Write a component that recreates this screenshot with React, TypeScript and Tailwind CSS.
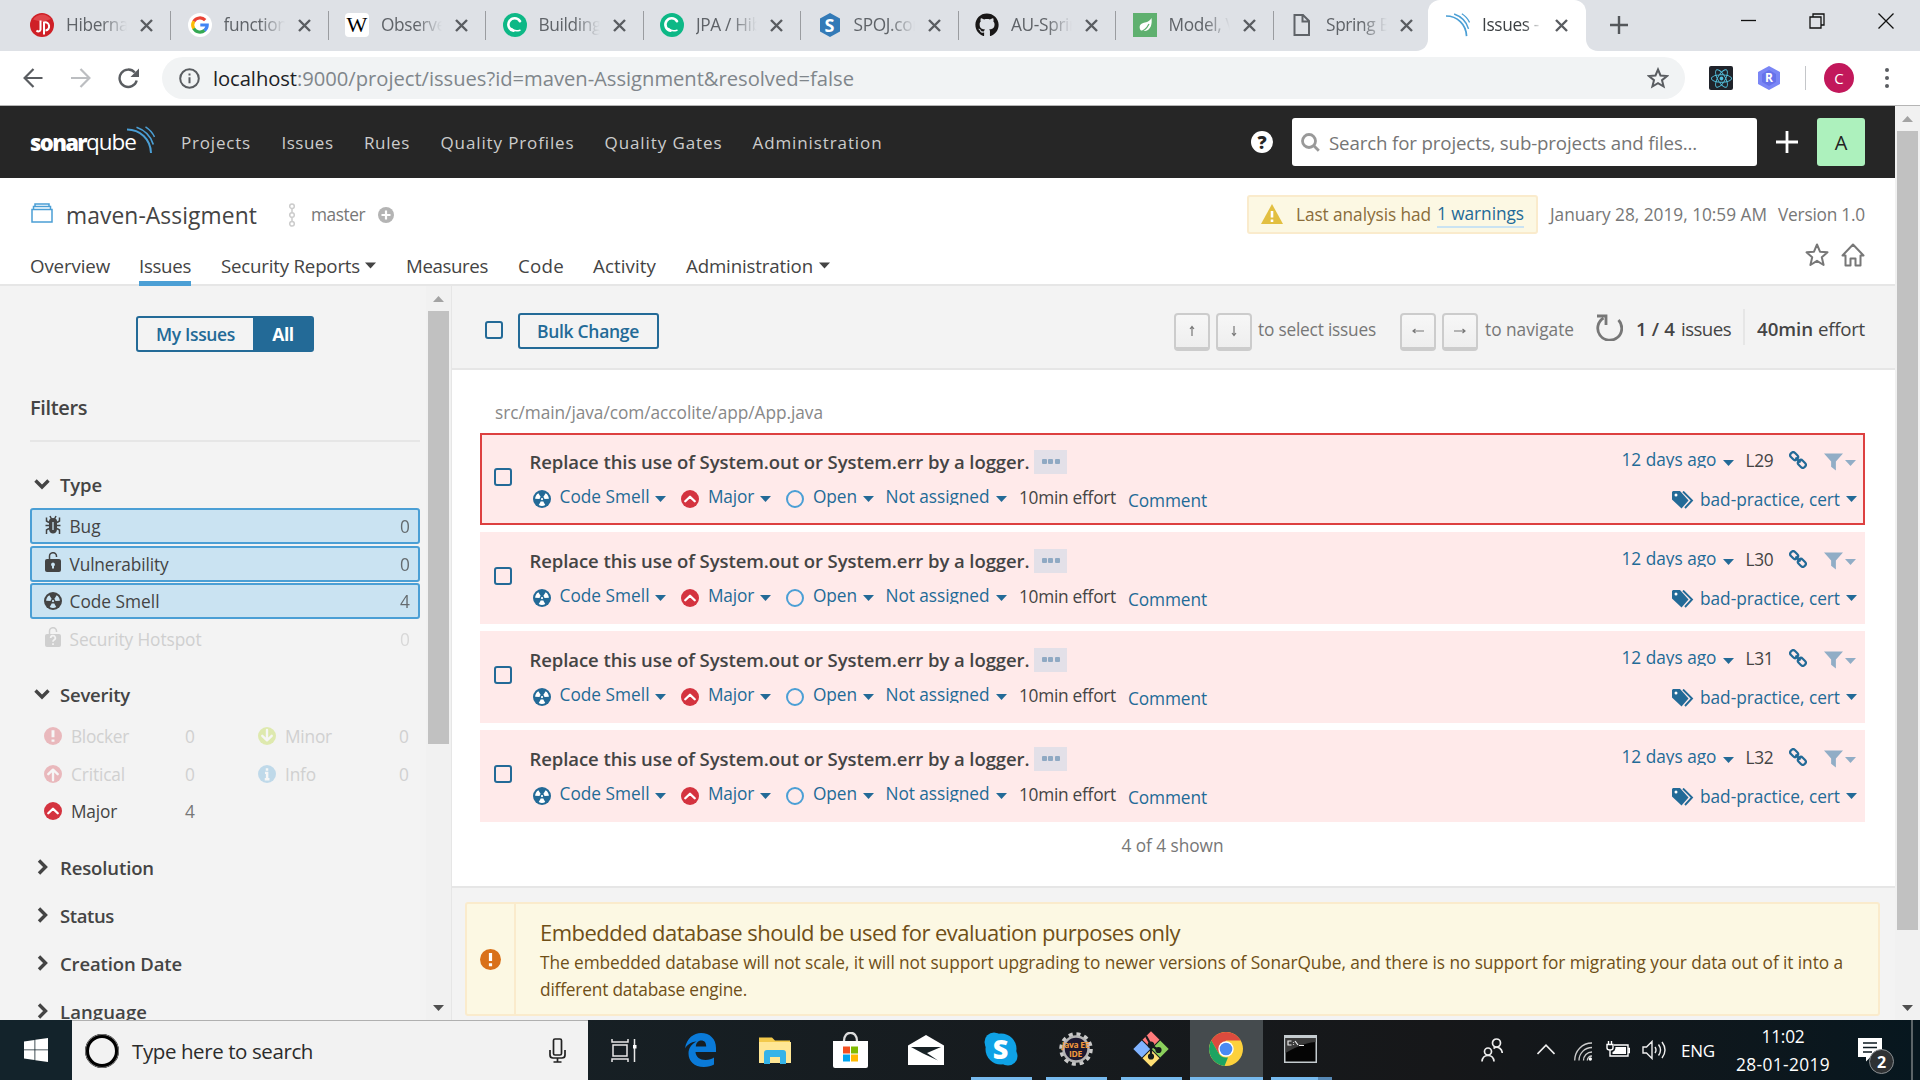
import { useLayoutEffect, useRef, type ReactNode } from "react";
import { FaGithub, FaReact } from "react-icons/fa";

/* A single line of text spread evenly over a given width. */
function T({ w, flat = false, className = "", children }: { w: number; flat?: boolean; className?: string; children: ReactNode }) {
  const ref = useRef<HTMLSpanElement>(null);
  useLayoutEffect(() => {
    const el = ref.current;
    if (!el) return;
    el.style.letterSpacing = "0px";
    const natural = el.getBoundingClientRect().width;
    const count = (el.textContent || "").length;
    if (count > 0) el.style.letterSpacing = `${(w - natural) / count}px`;
  }, [w]);
  return (
    <span className={`block shrink-0 whitespace-nowrap ${flat ? "" : "pt-[2px]"} ${className}`} style={{ width: w }}>
      <span ref={ref} className="inline-block">
        {children}
      </span>
    </span>
  );
}

/* ---------- shared icons ---------- */

function Caret({ className = "" }: { className?: string }) {
  return (
    <svg viewBox="0 0 11 6" className={`h-[6px] w-[11px] shrink-0 ${className}`} fill="currentColor">
      <path d="M0 0h11L5.5 6z" />
    </svg>
  );
}

function SonarWaves({ className = "" }: { className?: string }) {
  return (
    <svg viewBox="0 0 28 28" className={`shrink-0 ${className}`} fill="none" stroke="#4b9fd5">
      <path d="M0 3.5C13 3.5 23.5 13 24 27" strokeWidth="2" />
      <path d="M9.5 1.2C17.5 4 24 10.5 26.3 18.5" strokeWidth="1.7" />
      <path d="M18.5.8C22.5 3.4 25.8 7 27.5 11" strokeWidth="1.5" />
    </svg>
  );
}

function SmellIcon({ className = "", hole = "#fff" }: { className?: string; hole?: string }) {
  const wedge = "M7 9.9 5.1 13.4a6.2 6.2 0 0 0 5.8 0L9 9.9a2.2 2.2 0 0 1-2 0z";
  return (
    <svg viewBox="0 0 16 16" className={`h-[18px] w-[18px] shrink-0 ${className}`}>
      <circle cx="8" cy="8" r="8" fill="currentColor" />
      <g fill={hole}>
        <path d={wedge} />
        <path d={wedge} transform="rotate(120 8 8)" />
        <path d={wedge} transform="rotate(240 8 8)" />
        <circle cx="8" cy="8" r="1" />
      </g>
    </svg>
  );
}

function SeverityIcon({ kind, className = "" }: { kind: string; className?: string }) {
  const color = kind === "minor" ? "#b0d513" : kind === "info" ? "#4b9fd5" : "#d4333f";
  return (
    <svg viewBox="0 0 16 16" className={`h-[18px] w-[18px] shrink-0 ${className}`}>
      <circle cx="8" cy="8" r="8" fill={color} />
      <g fill="none" stroke="#fff" strokeWidth="2.1">
        {kind === "major" && <path d="M3.8 10 8 6l4.2 4" strokeLinecap="round" strokeLinejoin="round" />}
        {kind === "critical" && <path d="M3.8 8.2 8 4.2l4.2 4M8 4.5v9" strokeLinecap="round" strokeLinejoin="round" />}
        {kind === "minor" && <path d="M3.8 7.8 8 11.8l4.2-4M8 11.5v-9" strokeLinecap="round" strokeLinejoin="round" />}
        {kind === "blocker" && <path d="M8 2.8v6.4M8 11v2.2" strokeWidth="2.6" />}
        {kind === "info" && <path d="M8 2.8V5M6.2 7h1.9v5.6M6 12.6h4.2" strokeWidth="2.2" />}
      </g>
    </svg>
  );
}

function Checkbox({ className = "" }: { className?: string }) {
  return <span className={`block h-[18px] w-[18px] shrink-0 rounded-[3px] border-2 border-[#236a97] ${className}`} />;
}

/* ---------- browser chrome ---------- */

function EducativeIcon() {
  return (
    <svg viewBox="0 0 24 24" className="h-6 w-6">
      <circle cx="12" cy="12" r="12" fill="#0db886" />
      <path d="M17 8.200A6.300 6.300 0 1 0 10.500 17.800" fill="none" stroke="#fff" strokeWidth="2.600" strokeLinecap="round" />
      <path d="M8.500 15.500q3 3.500 8.500 1.700" fill="none" stroke="#fff" strokeWidth="1.500" strokeLinecap="round" />
    </svg>
  );
}

const tabs: { label: string; icon: ReactNode }[] = [
  {
    label: "Hibernate",
    icon: (
      <svg viewBox="0 0 24 24" className="h-6 w-6">
        <circle cx="12" cy="12" r="12" fill="#cf2027" />
        <path d="M3 6.500A11 11 0 0 1 21 6L12 9z" fill="#e0454a" />
        <path d="M10.500 7.500v9c0 2-2.500 2.500-4 1M14 21.500V9.500c6-1.500 7 7.500 1.500 8" fill="none" stroke="#fff" strokeWidth="2" />
      </svg>
    ),
  },
  {
    label: "functional",
    icon: (
      <svg viewBox="0 0 24 24" className="h-6 w-6">
        <circle cx="12" cy="12" r="12" fill="#fff" />
        <g fill="none" strokeWidth="3.2">
          <path d="M17.2 7.2A7.2 7.2 0 0 0 5.8 8.5" stroke="#ea4335" />
          <path d="M5.8 8.3a7.2 7.2 0 0 0 0 7.4" stroke="#fbbc05" />
          <path d="M5.7 15.5a7.2 7.2 0 0 0 11 1.8" stroke="#34a853" />
          <path d="M16.5 17.5A7.2 7.2 0 0 0 19.2 12H12.3" stroke="#4285f4" />
        </g>
      </svg>
    ),
  },
  {
    label: "Observer",
    icon: (
      <span className="flex h-6 w-6 items-center justify-center rounded-[4px] bg-white font-['Liberation_Serif',serif] text-[22px] leading-none text-black">
        W
      </span>
    ),
  },
  { label: "Building", icon: <EducativeIcon /> },
  { label: "JPA / Hibernate", icon: <EducativeIcon /> },
  {
    label: "SPOJ.com",
    icon: (
      <span className="relative flex h-6 w-6 items-center justify-center text-[18px] leading-none font-bold text-white">
        <svg viewBox="0 0 24 24" className="absolute inset-0 h-6 w-6">
          <path d="M12 0 22 5.5v13L12 24 2 18.500V5.500z" fill="#337ab7" />
        </svg>
        <span className="relative">S</span>
      </span>
    ),
  },
  { label: "AU-Spring", icon: <FaGithub className="h-6 w-6 text-[#191717]" /> },
  {
    label: "Model, Vi",
    icon: (
      <svg viewBox="0 0 24 24" className="h-6 w-6">
        <path d="M0 0h24v24H0z" fill="#5fb06f" />
        <path d="M18.500 5c.8 6-.6 12-6.500 13-2 .3-3.700-.2-4.600-1C5 12 9 10 12 9.500c3-.5 5-2 6.500-4.500z" fill="#fff" />
        <path d="M6 19c4-.5 8-4 10-8" stroke="#5fb06f" strokeWidth="1.200" fill="none" />
      </svg>
    ),
  },
  {
    label: "Spring Boot",
    icon: (
      <svg viewBox="0 0 24 24" className="h-6 w-6" fill="none" stroke="#5f6368" strokeWidth="2">
        <path d="M4.500 2h8.500l6 6v14H4.500zM12.500 2v6.500h6.500" />
      </svg>
    ),
  },
];

function CloseX({ className = "" }: { className?: string }) {
  return (
    <svg viewBox="0 0 13 13" className={`h-[13px] w-[13px] shrink-0 ${className}`} stroke="#5a5d61" strokeWidth="2.400">
      <path d="M1 1l11 11M12 1 1 12" />
    </svg>
  );
}

function TabStrip() {
  return (
    <div className="flex h-[51px] shrink-0 items-start bg-[#dee1e6] pl-[13.5px]">
      {tabs.map((t, i) => (
        <div key={t.label} className="flex h-[50px] w-[157.5px] shrink-0 items-center">
          <span className="ml-[16.5px] shrink-0">{t.icon}</span>
          <span className="ml-[12px] w-[61px] shrink-0 overflow-hidden [mask-image:linear-gradient(to_right,black_58%,transparent)] text-[17.3px] tracking-[-0.35px] whitespace-nowrap text-[#5f6368]">
            {t.label}
          </span>
          <CloseX className="ml-[13px]" />
          <span className={`ml-[17px] h-[29px] w-[1.5px] ${i === 8 ? "bg-transparent" : "bg-[#9a9ca0]"}`} />
        </div>
      ))}
      <div className="relative -ml-[3px] flex h-[51px] w-[157.5px] shrink-0 items-center rounded-t-[12px] bg-white pb-px">
        <svg viewBox="0 0 12 12" className="absolute bottom-0 -left-3 h-3 w-3">
          <path d="M12 0v12H0C7 12 12 7 12 0z" fill="#fff" />
        </svg>
        <svg viewBox="0 0 12 12" className="absolute -right-3 bottom-0 h-3 w-3">
          <path d="M0 0v12h12C5 12 0 7 0 0z" fill="#fff" />
        </svg>
        <SonarWaves className="ml-[18px] h-7 w-[24px]" />
        <span className="ml-[12px] w-[60px] shrink-0 overflow-hidden [mask-image:linear-gradient(to_right,black_70%,transparent)] text-[17.3px] tracking-[-0.35px] whitespace-nowrap text-[#3c4043]">
          Issues - ma
        </span>
        <CloseX className="ml-[13px]" />
      </div>
      <svg viewBox="0 0 18 18" className="mt-[16px] ml-[24px] h-[18px] w-[18px] shrink-0" stroke="#54575b" strokeWidth="2.400">
        <path d="M9 0v18M0 9h18" />
      </svg>
      <svg viewBox="0 0 16 16" className="mt-[13px] ml-[113px] h-4 w-4 shrink-0" stroke="#111" strokeWidth="1.300">
        <path d="M0 7.500h15" />
      </svg>
      <svg viewBox="0 0 16 16" className="mt-[13px] ml-[52px] h-4 w-4 shrink-0" fill="none" stroke="#111" strokeWidth="1.300">
        <path d="M1 4h11v11H1zM4 4V1h11v11h-3" />
      </svg>
      <svg viewBox="0 0 16 16" className="mt-[13px] ml-[53px] h-4 w-4 shrink-0" stroke="#111" strokeWidth="1.300">
        <path d="M.5.500l15 15M15.500.5l-15 15" />
      </svg>
    </div>
  );
}

function AddressBar() {
  return (
    <div className="flex h-[55px] shrink-0 items-center border-b border-[#b5b5b5] bg-white pl-[23px]">
      <svg viewBox="0 0 20 20" className="h-5 w-5 shrink-0" fill="none" stroke="#5a5d61" strokeWidth="2.200">
        <path d="M19.500 10H1.500M10.500 1 1.600 10l8.900 9" />
      </svg>
      <svg viewBox="0 0 20 20" className="ml-[28px] h-5 w-5 shrink-0" fill="none" stroke="#bcbec1" strokeWidth="2.200">
        <path d="M0 10h18M9.500 1l8.900 9-8.900 9" />
      </svg>
      <svg viewBox="0 0 21 21" className="ml-[27px] h-[21px] w-[21px] shrink-0" fill="none" stroke="#5a5d61" strokeWidth="2.400">
        <path d="M18.700 12.500A8.700 8.700 0 1 1 16.800 4.500" />
        <path d="M21 .5v8.500h-8.500z" fill="#5a5d61" stroke="none" />
      </svg>
      <div className="ml-[23px] flex h-[42px] w-[1523px] shrink-0 items-center rounded-full bg-[#f1f3f4] pl-[17px]">
        <svg viewBox="0 0 21 21" className="h-[21px] w-[21px] shrink-0" fill="none" stroke="#5a5d61" strokeWidth="2">
          <circle cx="10.500" cy="10.500" r="9.300" />
          <path d="M10.500 9.200v6M10.500 5.400v2.200" />
        </svg>
        <T flat w={84} className="ml-[13px] text-[20.200px] text-[#202124]">localhost</T>
        <T flat w={557} className="text-[20.200px] text-[#80868b]">:9000/project/issues?id=maven-Assignment&amp;resolved=false</T>
        <svg viewBox="0 0 22 22" className="ml-[793px] h-[22px] w-[22px] shrink-0" fill="none" stroke="#5a5d61" strokeWidth="2">
          <path d="M11 2.500l2.500 6 6.500.5-5 4.200 1.600 6.300-5.600-3.400-5.600 3.400L7 13.200 2 9l6.500-.5z" />
        </svg>
      </div>
      <span className="ml-[24px] flex h-6 w-6 shrink-0 items-center justify-center rounded-[2px] bg-[#20232a]">
        <FaReact className="h-[21px] w-[21px] text-[#53c1de]" />
      </span>
      <span className="relative ml-[25px] flex h-6 w-[22px] shrink-0 items-center justify-center text-[12px] leading-none font-bold text-white">
        <svg viewBox="0 0 22 24" className="absolute inset-0 h-6 w-[22px]">
          <path d="M11 0l11 6v12l-11 6L0 18V6z" fill="#7a86f5" />
          <path d="M11 4l7 4v8l-7 4-7-4V8z" fill="#6672ea" />
        </svg>
        <span className="relative">R</span>
      </span>
      <span className="ml-[25px] h-[24px] w-px shrink-0 bg-[#c4c6c9]" />
      <span className="ml-[18px] flex h-[30px] w-[30px] shrink-0 items-center justify-center rounded-full bg-[#c2185b] text-[15px] text-white">
        C
      </span>
      <span className="ml-[31px] flex shrink-0 flex-col gap-[4px]">
        <span className="h-1 w-1 rounded-full bg-[#5a5d61]" />
        <span className="h-1 w-1 rounded-full bg-[#5a5d61]" />
        <span className="h-1 w-1 rounded-full bg-[#5a5d61]" />
      </span>
    </div>
  );
}

/* ---------- SonarQube ---------- */

function GlobalNav() {
  const items = [
    ["Projects", 70, "ml-[26px]"],
    ["Issues", 52, "ml-[30.500px]"],
    ["Rules", 46, "ml-[30.500px]"],
    ["Quality Profiles", 134, "ml-[30.500px]"],
    ["Quality Gates", 118, "ml-[30px]"],
    ["Administration", 130, "ml-[30px]"],
  ] as const;
  return (
    <div className="flex h-[72px] shrink-0 items-center bg-[#262626] pl-[30px] text-[#ccc]">
      <div className="flex h-[32px] w-[125px] shrink-0 items-start">
        <T flat w={56} className="mt-[2px] text-[22px] leading-[28px] font-extrabold text-white">sonar</T>
        <T flat w={50} className="mt-[2px] text-[22.500px] leading-[28px] text-white">qube</T>
        <SonarWaves className="-ml-[9px] h-[28px] w-[28px]" />
      </div>
      {items.map(([label, w, ml]) => (
        <T key={label} w={w} className={`${ml} text-[17px]`}>{label}</T>
      ))}
      <span className="ml-[368.500px] flex h-[22px] w-[22px] shrink-0 items-center justify-center rounded-full bg-white text-[18px] leading-none font-extrabold text-[#262626]">
        ?
      </span>
      <div className="ml-[19px] flex h-12 w-[465px] shrink-0 items-center rounded-[3px] bg-white pl-[9px]">
        <svg viewBox="0 0 19 19" className="h-[19px] w-[19px] shrink-0" fill="none" stroke="#999" strokeWidth="2.800">
          <circle cx="8" cy="8" r="6.500" />
          <path d="M12.800 12.800l5 5" />
        </svg>
        <T w={368} className="ml-[9px] text-[18.700px] text-[#757575]">Search for projects, sub-projects and files...</T>
      </div>
      <svg viewBox="0 0 22 22" className="ml-[19px] h-[22px] w-[22px] shrink-0" stroke="#fff" strokeWidth="2.800">
        <path d="M11 0v22M0 11h22" />
      </svg>
      <span className="ml-[19px] flex h-12 w-12 shrink-0 items-center justify-center rounded-[3px] bg-[#adf1bd] pt-[2px] text-[20px] text-[#222]">A</span>
    </div>
  );
}

function ProjectHeader() {
  return (
    <div className="flex h-[108px] shrink-0 flex-col border-b-2 border-[#e6e6e6] bg-white">
      <div className="mt-[17px] flex h-[40px] shrink-0 items-center pl-[31px]">
        <svg viewBox="0 0 22 20" className="-mt-[5px] h-[20px] w-[22px] shrink-0" fill="none" stroke="#4b9fd5" strokeWidth="1.500">
          <path d="M1 6.500h20V19H1zM2.500 6.500V3.600h17v2.900M4 3.600V1h14v2.600" />
        </svg>
        <T w={191} className="ml-[13px] text-[22.800px] text-[#444]">maven-Assigment</T>
        <svg viewBox="0 0 8 24" className="ml-[31px] h-6 w-2 shrink-0" fill="none" stroke="#ccc" strokeWidth="1.500">
          <circle cx="4" cy="3.200" r="2.300" />
          <circle cx="4" cy="12" r="2.300" />
          <circle cx="4" cy="20.800" r="2.300" />
          <path d="M4 5.500v4.200M4 14.300v4.200" />
        </svg>
        <T flat w={54} className="ml-[15px] text-[17.300px] text-[#777]">master</T>
        <svg viewBox="0 0 16 16" className="-mt-px ml-[13px] h-4 w-4 shrink-0">
          <circle cx="8" cy="8" r="8" fill="#b4b4b4" />
          <path d="M8 3.500v9M3.500 8h9" stroke="#fff" strokeWidth="2.200" />
        </svg>
        <div className="-mt-[2px] ml-[853px] flex h-[39px] w-[291px] shrink-0 items-center rounded-[3px] border-2 border-[#faebcc] bg-[#fcf8e3] pl-[12px]">
          <svg viewBox="0 0 22 20" className="h-5 w-[22px] shrink-0">
            <path d="M11 0 22 20H0z" fill="#e2bf41" />
            <path d="M11 7v6.500M11 15.500v2.500" stroke="#fff" strokeWidth="2.600" />
          </svg>
          <T w={135} className="ml-[13px] text-[17.300px] text-[#8a6d3b]">Last analysis had</T>
          <T flat w={87} className="ml-[6px] h-[28px] border-b-2 border-[#cae3f2] text-[17.300px] leading-[27px] text-[#236a97]">1 warnings</T>
        </div>
        <T flat w={217} className="ml-[12px] text-[17.300px] text-[#777]">January 28, 2019, 10:59 AM</T>
        <T flat w={87} className="ml-[11px] text-[17.300px] text-[#777]">Version 1.0</T>
      </div>
      <div className="flex h-[46px] shrink-0 items-end pl-[30px] text-[18.700px] leading-[39px] text-[#444]">
        <T flat w={80} className="h-[35px]">Overview</T>
        <T flat w={52} className="ml-[29px] h-[35px]">Issues</T>
        <T flat w={139} className="ml-[30px] h-[35px]">Security Reports</T>
        <Caret className="mb-[12px] ml-[5px] h-[7px]" />
        <T flat w={82} className="ml-[30px] h-[35px]">Measures</T>
        <T flat w={46} className="ml-[30px] h-[35px]">Code</T>
        <T flat w={63} className="ml-[29px] h-[35px]">Activity</T>
        <T flat w={127} className="ml-[30px] h-[35px]">Administration</T>
        <Caret className="mb-[12px] ml-[6px] h-[7px]" />
        <svg viewBox="0 0 24 24" className="mb-[14px] ml-[975px] h-6 w-6 shrink-0" fill="none" stroke="#777" strokeWidth="2" strokeLinejoin="round">
          <path d="M12 1.500l3 7.200 7.500.6-5.700 5 1.800 7.700-6.600-4.200L5.400 22l1.800-7.700-5.700-5L9 8.700z" />
        </svg>
        <svg viewBox="0 0 24 24" className="mb-[14px] ml-3 h-6 w-6 shrink-0" fill="none" stroke="#777" strokeWidth="2" strokeLinejoin="round">
          <path d="M1.500 12.500 12 1.500l10.500 11h-3v10h-5v-7h-5v7h-5v-10z" />
        </svg>
      </div>
      <div className="ml-[139px] h-[5px] w-[52px] shrink-0 bg-[#4b9fd5]" />
    </div>
  );
}

function FacetTitle({ label, w, open = false, className = "" }: { label: string; w: number; open?: boolean; className?: string }) {
  return (
    <div className={`flex h-[30px] shrink-0 items-center pl-[4px] ${className}`}>
      <svg viewBox="0 0 16 16" className="h-4 w-4 shrink-0" fill="none" stroke="#444" strokeWidth="3.400">
        {open ? <path d="M1.500 4.500 8 11l6.500-6.500" /> : <path d="M5 1.500 11.500 8 5 14.500" />}
      </svg>
      <T w={w} className="ml-[10px] text-[18.500px] font-semibold text-[#444]">{label}</T>
    </div>
  );
}

function LockIcon({ question = false }: { question?: boolean }) {
  return (
    <svg viewBox="0 0 18 20" className="-mt-[3px] h-5 w-[18px] shrink-0">
      <path d="M5.500 8.500V4.400a3.500 3.500 0 0 1 7-.4v1" fill="none" stroke="currentColor" strokeWidth="1.500" />
      <rect x="1" y="7" width="16" height="13" rx="2" fill="currentColor" />
      {question ? (
        <path d="M6.700 11a2.300 2.300 0 1 1 3.300 2c-.7.400-1 .7-1 1.700M9 16.300v1.700" fill="none" stroke="#f3f3f3" strokeWidth="1.700" />
      ) : (
        <path d="M9 10.500a2 2 0 0 1 1 3.700V16.500H8v-2.300a2 2 0 0 1 1-3.700z" fill="#cae3f2" />
      )}
    </svg>
  );
}

function BugIcon() {
  return (
    <svg viewBox="0 0 18 20" className="-mt-[2px] h-5 w-[18px] shrink-0">
      <path d="M5 6C5 2 13 2 13 6v8c0 6-8 6-8 0z" fill="currentColor" />
      <path d="M6 1 7.500 4M12 1 10.500 4M5 7.500 2.500 6V2.500M13 7.500 15.500 6V2.500M5 10.500H1.500M13 10.500h3.500M5 13.500 2.500 15v4M13 13.500l2.500 1.500v4" fill="none" stroke="currentColor" strokeWidth="1.500" />
      <path d="M9 7v8" stroke="#cae3f2" strokeWidth="1.300" />
    </svg>
  );
}

function TypeRow({ icon, label, w, count, className }: { icon: ReactNode; label: string; w: number; count: string; className: string }) {
  return (
    <div className={`flex h-[36px] w-[390px] shrink-0 items-center rounded-[3px] border-2 pl-[12px] ${className}`}>
      <span className="flex w-[18px] justify-center">{icon}</span>
      <T w={w} className="ml-[7.500px] text-[17.300px]">{label}</T>
      <span className="ml-auto pt-[2px] pr-[8px] text-[17.300px] opacity-75">{count}</span>
    </div>
  );
}

function SeverityRow({ kind, label, w, count, active = false }: { kind: string; label: string; w: number; count: string; active?: boolean }) {
  return (
    <div className={`flex h-[37.500px] w-[214px] shrink-0 items-center pl-[14px] ${active ? "text-[#444]" : "text-[#d0d0d0]"}`}>
      <SeverityIcon kind={kind} className={active ? "" : "opacity-30"} />
      <T w={w} className="ml-[9px] text-[17.300px]">{label}</T>
      <span className={`mr-[49px] ml-auto pt-[2px] text-[17.300px] ${active ? "text-[#777]" : ""}`}>{count}</span>
    </div>
  );
}

function Sidebar() {
  return (
    <aside className="flex h-full w-[452px] shrink-0 overflow-hidden border-r border-[#e6e6e6] bg-[#f3f3f3]">
      <div className="flex w-[426px] shrink-0 flex-col overflow-hidden pl-[30px]">
        <div className="mt-[30px] ml-[106px] flex h-[36px] w-[178px] shrink-0 items-center rounded-[3px] border-2 border-[#236a97] text-[17.500px] font-semibold">
          <T flat w={79} className="ml-[18px] text-[#236a97]">My Issues</T>
          <span className="ml-[18px] flex h-[36px] w-[61px] items-center justify-center rounded-r-[3px] bg-[#236a97] pl-px font-bold tracking-tight text-white">All</span>
        </div>
        <T flat w={57} className="mt-[40px] text-[20px] leading-[32px] font-semibold text-[#444]">Filters</T>
        <div className="mt-[16px] h-[2px] w-[390px] shrink-0 bg-[#e6e6e6]" />
        <FacetTitle label="Type" w={42} open className="mt-[27px]" />
        <div className="mt-[9px] flex shrink-0 flex-col gap-[1.500px]">
          <TypeRow icon={<BugIcon />} label="Bug" w={31} count="0" className="border-[#4b9fd5] bg-[#cae3f2] text-[#444]" />
          <TypeRow icon={<LockIcon />} label="Vulnerability" w={99} count="0" className="border-[#4b9fd5] bg-[#cae3f2] text-[#444]" />
          <TypeRow icon={<SmellIcon hole="#cae3f2" />} label="Code Smell" w={90} count="4" className="border-[#4b9fd5] bg-[#cae3f2] text-[#444]" />
          <TypeRow icon={<LockIcon question />} label="Security Hotspot" w={132} count="0" className="border-transparent text-[#cfcfcf]" />
        </div>
        <FacetTitle label="Severity" w={70} open className="mt-[22px]" />
        <div className="mt-[8px] flex shrink-0">
          <div className="w-[214px] shrink-0 pt-px">
            <SeverityRow kind="blocker" label="Blocker" w={58} count="0" />
            <SeverityRow kind="critical" label="Critical" w={54} count="0" />
            <SeverityRow kind="major" label="Major" w={46} count="4" active />
          </div>
          <div className="w-[214px] shrink-0 pt-px">
            <SeverityRow kind="minor" label="Minor" w={47} count="0" />
            <SeverityRow kind="info" label="Info" w={31} count="0" />
          </div>
        </div>
        <FacetTitle label="Resolution" w={94} className="mt-[22px]" />
        <FacetTitle label="Status" w={54} className="mt-[18px]" />
        <FacetTitle label="Creation Date" w={122} className="mt-[18px]" />
        <FacetTitle label="Language" w={87} className="mt-[18px]" />
      </div>
      <div className="flex w-[25px] shrink-0 flex-col items-center bg-[#f1f1f1]">
        <Caret className="mt-[10px] rotate-180 text-[#a3a3a3]" />
        <div className="mt-[9px] h-[433px] w-[21px] bg-[#c1c1c1]" />
        <Caret className="mt-auto mb-[9px] text-[#505050]" />
      </div>
    </aside>
  );
}

function Key({ d, className = "" }: { d: string; className?: string }) {
  return (
    <span className={`flex h-[38px] w-[36px] shrink-0 items-center justify-center rounded-[4px] border-2 border-b-4 border-[#ccc] bg-gradient-to-b from-[#f7f7f7] to-[#eee] ${className}`}>
      <svg viewBox="0 0 14 14" className="h-[14px] w-[14px]" fill="none" stroke="#777" strokeWidth="1.200">
        <path d={d} />
      </svg>
    </span>
  );
}

function IssuesToolbar() {
  return (
    <div className="flex h-[84px] shrink-0 items-center border-b-2 border-[#e6e6e6] bg-[#f3f3f3] pl-[33px]">
      <Checkbox className="mt-[5px]" />
      <div className="mt-[7px] ml-[15px] flex h-[36px] w-[141px] shrink-0 items-center rounded-[3px] border-2 border-[#236a97] pl-[17px]">
        <T w={102} className="text-[17.500px] font-semibold text-[#236a97]">Bulk Change</T>
      </div>
      <Key d="M7 12V3M5 5 7 2.500 9 5" className="mt-[9px] ml-[515px]" />
      <Key d="M7 2v9M5 9l2 2.500L9 9" className="mt-[9px] ml-[6px]" />
      <T w={118} className="mt-[4px] ml-[6px] text-[17.300px] text-[#777]">to select issues</T>
      <Key d="M13 7H2M4.500 5 2 7l2.500 2" className="mt-[9px] ml-[24px]" />
      <Key d="M1 7h11M9.500 5 12 7 9.500 9" className="mt-[9px] ml-[6px]" />
      <T w={89} className="mt-[4px] ml-[7px] text-[17.300px] text-[#777]">to navigate</T>
      <svg viewBox="0 0 27 27" className="ml-[22px] h-[27px] w-[27px] shrink-0" fill="none" stroke="#777" strokeWidth="2.800">
        <path d="M22.500 6A12 12 0 1 1 7.500 4" />
        <path d="M1 2h9v9" />
      </svg>
      <div className="mt-[2px] ml-[13px] flex shrink-0 text-[18.700px] text-[#444]">
        <T w={39} className="font-semibold">1 / 4</T>
        <T w={50} className="ml-[6px]">issues</T>
      </div>
      <span className="ml-[12px] h-[36px] w-[2px] shrink-0 bg-[#e6e6e6]" />
      <div className="mt-[2px] ml-[12px] flex shrink-0 text-[18.700px] text-[#444]">
        <T w={56} className="font-semibold">40min</T>
        <T w={47} className="ml-[5px]">effort</T>
      </div>
    </div>
  );
}

function LinkIcon() {
  return (
    <svg viewBox="0 0 18 18" className="h-[18px] w-[18px] shrink-0" fill="none" stroke="#236a97" strokeWidth="2.200">
      <rect x="-4" y="-2.900" width="8.400" height="5.800" rx="2.600" transform="translate(5 5) rotate(45)" />
      <rect x="-4.400" y="-2.900" width="8.400" height="5.800" rx="2.600" transform="translate(13 13) rotate(45)" />
      <path d="M6.500 6.500l5 5" />
    </svg>
  );
}

function Issue({ line, selected = false }: { line: string; selected?: boolean }) {
  return (
    <div className={`flex h-[92px] shrink-0 border-2 bg-[#ffeaea] text-[17.300px] leading-[24px] text-[#236a97] ${selected ? "border-[#dd4040]" : "border-[#ffeaea]"}`}>
      <Checkbox className="mt-[33px] ml-[12px]" />
      <div className="ml-[17.500px] flex w-[1060px] shrink-0 flex-col">
        <div className="mt-[14px] flex h-[25px] items-center">
          <T flat w={500} className="text-[18.500px] font-semibold text-[#444]">Replace this use of System.out or System.err by a logger.</T>
          <span className="ml-[4.500px] flex h-[24px] w-[33px] items-center justify-center gap-[1.500px] bg-[#e3e0e8]">
            <span className="h-[5px] w-[5px] rounded-[1px] bg-[#8fa9c3]" />
            <span className="h-[5px] w-[5px] rounded-[1px] bg-[#8fa9c3]" />
            <span className="h-[5px] w-[5px] rounded-[1px] bg-[#8fa9c3]" />
          </span>
        </div>
        <div className="mt-[11px] flex h-[28px] items-start pl-[3.500px]">
          <SmellIcon className="mt-[5px]" />
          <T flat w={90} className="ml-[8.500px]">Code Smell</T>
          <Caret className="mt-[11px] ml-[5.500px]" />
          <SeverityIcon kind="major" className="mt-[5px] ml-[15px]" />
          <T flat w={46} className="ml-[9px]">Major</T>
          <Caret className="mt-[11px] ml-[6px]" />
          <span className="mt-[5px] ml-[15px] h-[18px] w-[18px] shrink-0 rounded-full border-[2.500px] border-[#4b9fd5]" />
          <T flat w={44} className="ml-[9px]">Open</T>
          <Caret className="mt-[11px] ml-[6px]" />
          <T flat w={104} className="ml-[11.500px] h-[20px] overflow-hidden">Not assigned</T>
          <Caret className="mt-[11px] ml-[6px]" />
          <T flat w={97} className="mt-[1px] ml-[12.500px] text-[#444]">10min effort</T>
          <T flat w={79} className="mt-[4px] ml-[12px]">Comment</T>
        </div>
      </div>
      <div className="ml-[30px] flex w-[240px] shrink-0 flex-col">
        <div className="mt-[13px] flex h-[24px] items-start pl-[2px]">
          <T flat w={95} className="h-[20px] overflow-hidden">12 days ago</T>
          <Caret className="mt-[12px] ml-[6px]" />
          <T flat w={28} className="mt-[1px] ml-[12px] text-[#444]">{line}</T>
          <span className="mt-[3px] ml-[15px]"><LinkIcon /></span>
          <svg viewBox="0 0 20 18" className="mt-[5px] ml-[17px] h-[18px] w-[19px] shrink-0" fill="#91adc6">
            <path d="M0 0h20l-7.500 8.500V18L7.500 14V8.500z" />
          </svg>
          <Caret className="mt-[12px] ml-[2px] text-[#91adc6]" />
        </div>
        <div className="mt-[16px] flex h-[24px] items-center pl-[52.500px]">
          <svg viewBox="0 0 22 18" className="-mt-px h-[18px] w-[22px] shrink-0">
            <path d="M1 0h7l8.500 9.500L9.500 17.500 0 8.500V1z" fill="#236a97" />
            <path d="M11 .5 20 9.500l-7 7.500" fill="none" stroke="#236a97" strokeWidth="1.900" />
            <circle cx="4" cy="4" r="1.500" fill="#fff" />
          </svg>
          <T flat w={140} className="ml-[6px]">bad-practice, cert</T>
          <Caret className="-mt-[2px] ml-[6px]" />
        </div>
      </div>
    </div>
  );
}

function Main() {
  return (
    <main className="flex h-full w-[1443px] shrink-0 flex-col bg-[#f3f3f3]">
      <IssuesToolbar />
      <div className="flex h-[518px] shrink-0 flex-col border-b-2 border-[#e6e6e6] bg-white pr-[30px] pl-[28px]">
        <T flat w={328} className="mt-[29px] ml-[15px] h-[34px] text-[17.300px] leading-[28px] text-[#888]">src/main/java/com/accolite/app/App.java</T>
        <div className="flex flex-col gap-[7px]">
          <Issue line="L29" selected />
          <Issue line="L30" />
          <Issue line="L31" />
          <Issue line="L32" />
        </div>
        <T flat w={102} className="mt-[10px] ml-[641.500px] text-[17.300px] leading-[28px] text-[#777]">4 of 4 shown</T>
      </div>
      <div className="mt-[14px] ml-[13px] flex h-[114px] w-[1415px] shrink-0 rounded-[3px] border-2 border-[#faebcc] bg-[#fcf8e3] text-[#6f4f17]">
        <div className="flex w-[49px] shrink-0 items-center justify-center border-r-2 border-[#faebcc]">
          <svg viewBox="0 0 21 21" className="h-[21px] w-[21px]">
            <circle cx="10.500" cy="10.500" r="10.500" fill="#d9711a" />
            <path d="M10.500 4v8M10.500 14.300v3" stroke="#fff" strokeWidth="3.200" />
          </svg>
        </div>
        <div className="pt-[12px] pl-[24px]">
          <T flat w={640} className="text-[22px] leading-[32px]">Embedded database should be used for evaluation purposes only</T>
          <T w={1303} className="-mt-px text-[17.300px] leading-[27px]">
            The embedded database will not scale, it will not support upgrading to newer versions of SonarQube, and there is no support for migrating your data out of it into a
          </T>
          <T flat w={207} className="text-[17.300px] leading-[27px]">different database engine.</T>
        </div>
      </div>
    </main>
  );
}

/* ---------- taskbar ---------- */

function TaskButton({ bar, className = "", children }: { bar: string; className?: string; children: ReactNode }) {
  return (
    <div className={`flex h-[60px] shrink-0 flex-col items-center ${className}`}>
      <div className="flex h-[57px] items-center">{children}</div>
      <div className={`h-[3px] w-full ${bar}`} />
    </div>
  );
}

function Taskbar() {
  return (
    <div className="flex h-[60px] shrink-0 items-center bg-gradient-to-r from-[#16252c] via-[#161719] via-75% to-[#07171f] text-white">
      <div className="flex h-full w-[72px] shrink-0 items-center justify-center bg-[#13232b]">
        <svg viewBox="0 0 24 24" className="h-6 w-6" fill="#fff">
          <path d="M0 3.500 10.500 2v9.500H0zM11.300 1.800 24 0v11.500H11.300zM0 12.300h10.500V22L0 20.500zM11.300 12.300H24V24l-12.700-1.800z" />
        </svg>
      </div>
      <div className="flex h-full w-[516px] shrink-0 items-center border-t border-[#b0b0b0] bg-[#f2f2f2] pl-[13px]">
        <span className="h-[34px] w-[34px] shrink-0 rounded-full border-[4.500px] border-black outline-1 -outline-offset-1 outline-[#777]" />
        <T w={181} className="ml-[13px] text-[20.500px] text-[#2b2b2b]">Type here to search</T>
        <svg viewBox="0 0 17 25" className="ml-[236px] h-[25px] w-[17px] shrink-0" fill="none" stroke="#222" strokeWidth="1.700">
          <rect x="4.500" y="1" width="8" height="16" rx="1.500" />
          <path d="M1 12v5c0 2 1 3 3 3h9c2 0 3-1 3-3v-5M8.500 20v4M4.500 24h8" />
        </svg>
      </div>
      <svg viewBox="0 0 26 24" className="ml-[23px] h-6 w-[26px] shrink-0" fill="none" stroke="#e8e8e8" strokeWidth="1.500">
        <path d="M1 1v3h16V1M2 7h14v11H2zM1 24v-3h16v3M23.500 1v23" />
        <path d="M22 7h3.500v3.500H22z" fill="#fff" stroke="none" />
      </svg>
      <svg viewBox="0 0 32 34" className="ml-[47px] h-[34px] w-8 shrink-0" fill="#0a7ad8">
        <path d="M1 15.500C2.500 5 10 0 17 0c9 0 15 6 15 15v4H11.500c.3 5 4.500 8 10 8 3.500 0 6.500-1 8.500-2.500v7C27.500 33 24 34 20 34 10 34 4.500 28 4.500 20.500c0-5.500 3-9.500 8-12C6.500 9 3 12 1 15.500zM11.800 13.500h10.400c0-4-1.800-6-5-6s-5 2.500-5.400 6z" />
      </svg>
      <svg viewBox="0 0 32 28" className="ml-[43px] h-7 w-8 shrink-0">
        <path d="M0 1.500h13l3 3h15v22H0z" fill="#f3c94b" />
        <path d="M0 6h32v21H0z" fill="#ffe694" />
        <path d="M5 28V17q0-3 3-3h16q3 0 3 3v11h-6v-7H11v7z" fill="#35b3e8" />
      </svg>
      <svg viewBox="0 0 35 36" className="ml-[42px] h-9 w-[35px] shrink-0">
        <path d="M11 9c0-11 13-11 13 0" fill="none" stroke="#ddd" strokeWidth="2.300" />
        <path d="M0 9h35v25q0 2-2 2H2q-2 0-2-2z" fill="#fff" />
        <path d="M10 14.500h7v7h-7z" fill="#f25022" />
        <path d="M18 14.500h7v7h-7z" fill="#7fba00" />
        <path d="M10 22.500h7v7h-7z" fill="#00a4ef" />
        <path d="M18 22.500h7v7h-7z" fill="#ffb900" />
      </svg>
      <svg viewBox="0 0 36 30" className="ml-[40px] h-[30px] w-9 shrink-0">
        <path d="M0 10.500 18 0l18 10.500V30H0z" fill="#fff" />
        <path d="M3 12h30L19 18l11 7.500L15 18.500z" fill="#182226" />
      </svg>
      <TaskButton bar="bg-[#76b9ed]" className="ml-[27px] w-[61px]">
        <span className="relative mr-[2px] flex h-[34px] w-[34px] items-center justify-center text-[27px] leading-none font-extrabold">
          <svg viewBox="0 0 34 34" className="absolute inset-0 h-[34px] w-[34px]" fill="#0fa2e6">
            <circle cx="10" cy="10" r="9.500" />
            <circle cx="24" cy="24" r="9.500" />
            <circle cx="17" cy="17" r="15.500" />
          </svg>
          <span className="relative">S</span>
        </span>
      </TaskButton>
      <TaskButton bar="bg-[#76b9ed]" className="ml-[14px] w-[61px]">
        <span className="relative mr-[2px] flex h-[34px] w-[34px] flex-col items-center justify-center text-[8.500px] leading-[9px] font-bold tracking-[-0.3px] whitespace-nowrap text-[#f39a3c]">
          <svg viewBox="-17 -17 34 34" className="absolute inset-0 h-[34px] w-[34px]">
            <circle r="14.800" fill="none" stroke="#c9c9c9" strokeWidth="4" strokeDasharray="4 3.750" />
            <circle r="12.500" fill="#1d1930" stroke="#b5b5b5" strokeWidth="2.500" />
          </svg>
          <span className="relative">Java EE</span>
          <span className="relative">IDE</span>
        </span>
      </TaskButton>
      <TaskButton bar="bg-[#76b9ed]" className="ml-[14px] w-[61px]">
        <svg viewBox="-18 -18 36 36" className="mr-px h-9 w-9">
          <g transform="rotate(45)">
            <rect x="-12.500" y="-12.500" width="12" height="12" fill="#ff7b7b" />
            <rect x=".5" y="-12.500" width="12" height="12" fill="#8bd05c" />
            <rect x="-12.500" y=".5" width="12" height="12" fill="#80b3ff" />
            <rect x=".5" y=".5" width="12" height="12" fill="#ffdf74" />
          </g>
          <g fill="#161b1e" stroke="#161b1e" strokeWidth="2.200">
            <path d="M-5-13 0-4V7M0-4 7 1" fill="none" />
            <circle cy="-4" r="2.300" />
            <circle cy="7.500" r="2" />
            <circle cx="7.500" cy="1" r="2" />
          </g>
        </svg>
      </TaskButton>
      <TaskButton bar="bg-[#76b9ed]" className="ml-[8px] w-[73px] bg-[#454b4e]">
        <svg viewBox="0 0 34 34" className="mr-px h-[34px] w-[34px]">
          <circle cx="17" cy="17" r="17" fill="#fdd13c" />
          <path d="M2.300 8.500A17 17 0 0 1 31.700 8.500H17L9.600 21.300z" fill="#dd4b3e" />
          <path d="M2.300 8.500 9.600 21.300Q12 25.500 17 25.500h2L15.500 33.900A17 17 0 0 1 2.300 8.500z" fill="#1da462" />
          <circle cx="17" cy="17" r="7.700" fill="#fff" />
          <circle cx="17" cy="17" r="6.300" fill="#4a8af4" />
        </svg>
      </TaskButton>
      <TaskButton bar="bg-gradient-to-r from-[#76b9ed] from-77% to-[#5688b5] to-77%" className="ml-[8px] w-[61px]">
        <svg viewBox="0 0 33 28" className="mr-[2px] h-7 w-[33px]">
          <rect width="33" height="28" fill="#c5ccd0" />
          <rect x="1.500" y="3" width="30" height="23.500" fill="#050505" />
          <path d="M1.500 3h30v4C20 8 8 14 1.500 18z" fill="#3a3a3a" />
          <path d="M7.500 6H4v4h3.500M9.500 7v.8M9.500 9.200v.8M11 6l3 4M15 10.500h5" stroke="#eee" fill="none" strokeWidth="1.200" />
        </svg>
      </TaskButton>
      <svg viewBox="0 0 22 24" className="ml-[149px] h-6 w-[22px] shrink-0" fill="none" stroke="#eee" strokeWidth="1.700">
        <circle cx="15.500" cy="5" r="4" />
        <circle cx="7" cy="13.500" r="3.500" />
        <path d="M1 23.500q.5-6 6-6t6 6M12.500 10.500q3-2.500 6.500 0 2 1.500 2.300 4.500" />
      </svg>
      <svg viewBox="0 0 18 11" className="-mt-[2px] ml-[34px] h-[11px] w-[18px] shrink-0" fill="none" stroke="#eee" strokeWidth="1.600">
        <path d="M.5 10 9 1.200 17.500 10" />
      </svg>
      <svg viewBox="0 0 18 19" className="mt-[2px] ml-[19px] h-[19px] w-[18px] shrink-0" fill="none" stroke="#ccc" strokeWidth="1.300">
        <path d="M.7 18.500C.7 9 8 1 18 1M5 18.500C5 11.500 10.500 5.500 18 5.500M9.500 18.500c0-4.500 3.500-8.500 8.500-8.500" />
        <path d="M13.300 18.500c0-2.500 2-4.500 4.700-4.500" />
        <circle cx="16.300" cy="17" r="1.700" fill="#fff" stroke="none" />
      </svg>
      <svg viewBox="0 0 24 18" className="ml-[14px] h-[18px] w-6 shrink-0" fill="none" stroke="#fff" strokeWidth="1.400">
        <path d="M8 4h14v11H4v-5M22.500 7.500h1v4h-1M1 3.500h6V7Q7 9 4 9T1 7zM2.500 0v3M5.500 0v3M4 9v6" />
        <path d="M9.500 6H20v7H6.500v-2q3-1 3-5z" fill="#fff" stroke="none" />
      </svg>
      <svg viewBox="0 0 24 20" className="ml-[12px] h-5 w-6 shrink-0" fill="none" stroke="#eee" strokeWidth="1.400">
        <path d="M1 7h3.500L10 1.500v17L4.500 13H1zM13 7q2 3 0 6M16.500 4.500q4 5.500 0 11M20 2q6 8 0 16" />
      </svg>
      <T w={34} className="ml-[15px] text-[17px]">ENG</T>
      <div className="ml-[21px] flex w-[94px] shrink-0 flex-col items-center pt-[2px] text-[17.300px] leading-[28px]">
        <T flat w={43}>11:02</T>
        <T flat w={94}>28-01-2019</T>
      </div>
      <div className="relative ml-[28px] h-[60px] w-[38px] shrink-0">
        <svg viewBox="0 0 24 24" className="mt-[18px] h-6 w-6">
          <path d="M0 0h24v19H12.500L8 23.500V19H0z" fill="#fff" />
          <path d="M5 5h14M5 9.500h14M5 14h9" stroke="#0d1a20" strokeWidth="1.500" />
        </svg>
        <span className="absolute top-[29px] left-[11px] flex h-[25px] w-[25px] items-center justify-center rounded-full border border-[#8a8f92] bg-[#2e3133] text-[16px] font-bold">
          2
        </span>
      </div>
      <span className="ml-[15px] h-full w-[2px] shrink-0 bg-[#5b6468]" />
    </div>
  );
}

export default function App() {
  return (
    <div className="flex h-[1080px] w-[1920px] flex-col overflow-hidden bg-white font-['Open_Sans','Noto_Sans',sans-serif]">
      <TabStrip />
      <AddressBar />
      <div className="flex h-[914px] shrink-0">
        <div className="flex w-[1895px] shrink-0 flex-col overflow-hidden">
          <GlobalNav />
          <ProjectHeader />
          <div className="flex h-[734px] shrink-0">
            <Sidebar />
            <Main />
          </div>
        </div>
        <div className="flex w-[25px] shrink-0 flex-col items-center bg-[#f1f1f1]">
          <Caret className="mt-[10px] rotate-180 text-[#a3a3a3]" />
          <div className="mt-[9px] h-[799px] w-[21px] bg-[#c1c1c1]" />
          <Caret className="mt-auto mb-[9px] text-[#505050]" />
        </div>
      </div>
      <Taskbar />
    </div>
  );
}
